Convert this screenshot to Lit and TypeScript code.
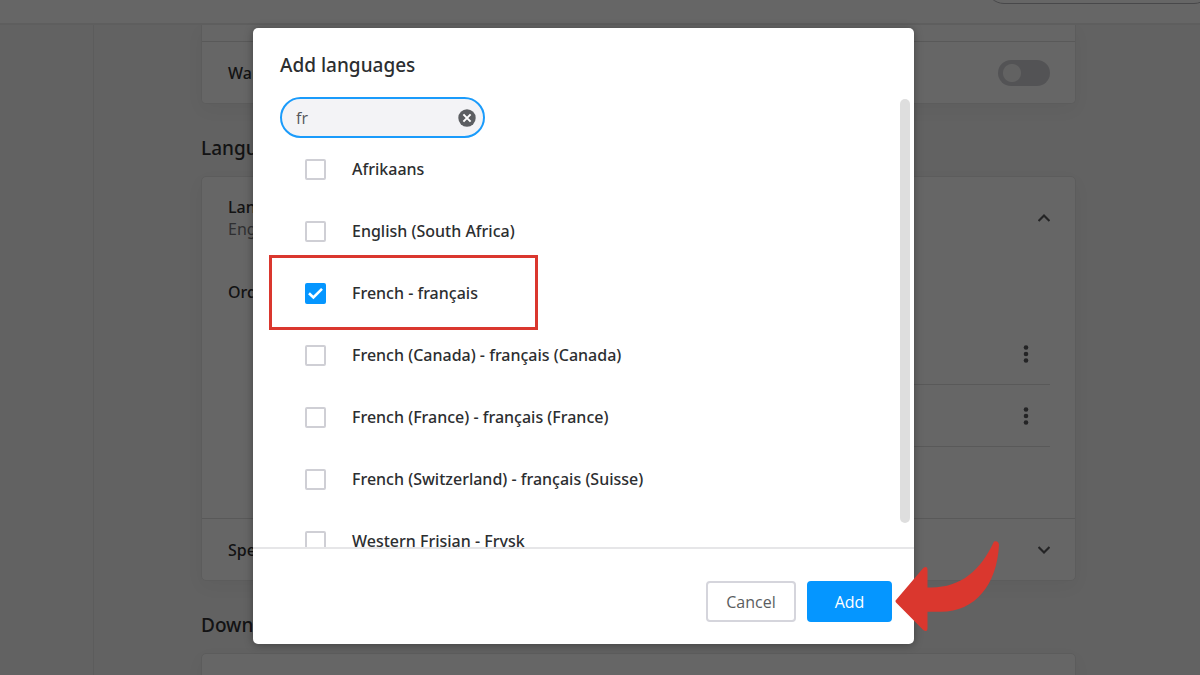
import { LitElement, html, css, svg, nothing } from "lit";
import { customElement, property, state } from "lit/decorators.js";

interface Language {
  id: string;
  name: string;
  marked?: boolean;
}

const LANGUAGES: Language[] = [
  { id: "af", name: "Afrikaans" },
  { id: "en-ZA", name: "English (South Africa)" },
  { id: "fr", name: "French - français", marked: true },
  { id: "fr-CA", name: "French (Canada) - français (Canada)" },
  { id: "fr-FR", name: "French (France) - français (France)" },
  { id: "fr-CH", name: "French (Switzerland) - français (Suisse)" },
  { id: "fy", name: "Western Frisian - Frysk" },
];

const chevron = (up: boolean) => html`
  <svg width="12" height="10" viewBox="1 0 12 10" aria-hidden="true">
    <path
      d=${up ? "M1.5 8 L7 2.5 L12.5 8" : "M1.5 2 L7 7.5 L12.5 2"}
      fill="none" stroke="#5a5b5e" stroke-width="2.2"
    />
  </svg>
`;

const dots = html`
  <svg width="6" height="18" viewBox="0 0 6 18" aria-hidden="true">
    ${[2.5, 9, 15.5].map((y) => svg`<circle cx="3" cy=${y} r="2.3" fill="#5a5b5e" />`)}
  </svg>
`;

@customElement("settings-page")
export class SettingsPage extends LitElement {
  static styles = css`
    :host {
      display: flex;
      flex-direction: column;
      height: 100vh;
      overflow: hidden;
      background: #f4f4f4;
      color: #303032;
      font: 500 16px/22px "Noto Sans", "Open Sans", sans-serif;
    }
    .topbar {
      box-sizing: border-box;
      flex: none;
      display: flex;
      justify-content: flex-end;
      align-items: flex-start;
      height: 25px;
      background: #fff;
      border-bottom: 2px solid #ececec;
      overflow: hidden;
    }
    .address {
      box-sizing: border-box;
      width: 226px;
      height: 36px;
      margin: -32px -12px 0 0;
      border: 1px solid #b4b4b8;
      border-radius: 18px;
    }
    .columns {
      flex: 1;
      min-height: 0;
      display: flex;
    }
    .side {
      flex: none;
      width: 93px;
      border-right: 1px solid #e6e6e6;
    }
    .content {
      flex: 1;
      min-width: 0;
      padding: 0 124px 0 107px;
    }
    .card {
      background: #fff;
      border: 1px solid #e6e6e6;
      border-radius: 5px;
      box-shadow: 0 6px 18px rgba(0, 0, 0, 0.04);
    }
    .card.continued {
      border-top: 0;
      border-radius: 0 0 5px 5px;
      padding-top: 16px;
    }
    .row {
      display: flex;
      align-items: center;
      justify-content: space-between;
      height: 61px;
      padding: 0 25px 0 26px;
      border-top: 1px solid #dedede;
    }
    .row.first {
      height: 81px;
      border-top: 0;
    }
    .sub {
      color: #77777b;
      font-weight: 400;
    }
    h2 {
      margin: 0;
      padding: 29px 0 13px;
      font-size: 19px;
      line-height: 30px;
      font-weight: 500;
    }
    .order {
      padding: 23px 25px 71px 26px;
    }
    .item {
      display: flex;
      align-items: center;
      justify-content: flex-end;
      height: 61px;
      margin-left: 48px;
      padding-right: 21px;
      border-bottom: 1px solid #dedede;
    }
    .order p {
      margin: 0 0 20px;
    }
    button {
      display: flex;
      padding: 0;
      border: 0;
      background: none;
    }
    .switch {
      appearance: none;
      box-sizing: border-box;
      width: 52px;
      height: 26px;
      margin: 0;
      border-radius: 13px;
      background: radial-gradient(circle 9px at 14px 13px, #f6f6f6 8.5px, #cfcfd4 9.5px);
    }
  `;

  render() {
    return html`
      <div class="topbar"><div class="address"></div></div>
      <div class="columns">
        <div class="side"></div>
        <div class="content">
          <div class="card continued">
            <div class="row">
              <label for="warn">Warn me</label>
              <input id="warn" class="switch" type="checkbox" role="switch" />
            </div>
          </div>
          <h2>Languages</h2>
          <div class="card">
            <div class="row first">
              <div>
                <div>Language</div>
                <div class="sub">English</div>
              </div>
              <button aria-label="Collapse">${chevron(true)}</button>
            </div>
            <div class="order">
              <p>Order</p>
              <div class="item"><button aria-label="More actions">${dots}</button></div>
              <div class="item"><button aria-label="More actions">${dots}</button></div>
            </div>
            <div class="row">
              <span>Spell check</span>
              <button aria-label="Expand">${chevron(false)}</button>
            </div>
          </div>
          <h2>Downloads</h2>
          <div class="card"><div class="row first"></div></div>
        </div>
      </div>
    `;
  }
}

@customElement("language-option")
export class LanguageOption extends LitElement {
  @property() name = "";
  @property({ type: Boolean }) checked = false;
  @property({ type: Boolean }) marked = false;

  static styles = css`
    :host {
      display: block;
    }
    .option {
      position: relative;
      display: flex;
      align-items: center;
      gap: 26px;
      height: 62px;
      padding-left: 25px;
    }
    .box {
      display: grid;
      width: 21px;
      height: 21px;
    }
    .box > * {
      grid-area: 1 / 1;
    }
    input {
      appearance: none;
      box-sizing: border-box;
      width: 21px;
      height: 21px;
      margin: 0;
      border: 2px solid #cfcfd5;
      border-radius: 2px;
      background: #fff;
    }
    input:checked {
      border-color: #0596ff;
      background: #0596ff;
    }
    svg {
      pointer-events: none;
    }
    .mark {
      position: absolute;
      box-sizing: border-box;
      top: -7px;
      left: -11px;
      width: 269px;
      height: 75px;
      border: 3px solid #da372e;
      pointer-events: none;
    }
  `;

  private toggle(e: Event) {
    this.checked = (e.target as HTMLInputElement).checked;
  }

  render() {
    return html`
      <div class="option">
        <span class="box">
          <input id="pick" type="checkbox" .checked=${this.checked} @change=${this.toggle} />
          ${this.checked
            ? html`<svg width="21" height="21" viewBox="0 0 21 21" aria-hidden="true">
                <path d="M4 10.3 L8.4 14.5 L17 5.8" fill="none" stroke="#fff" stroke-width="2.6" />
              </svg>`
            : nothing}
        </span>
        <label for="pick">${this.name}</label>
        ${this.marked ? html`<div class="mark"></div>` : nothing}
      </div>
    `;
  }
}

@customElement("add-languages-dialog")
export class AddLanguagesDialog extends LitElement {
  @state() private query = "fr";

  static styles = css`
    :host {
      display: block;
      box-sizing: border-box;
      width: 100%;
      max-width: 661px;
      color: #2c2e30;
      background: #fff;
      border-radius: 5px;
      box-shadow: 0 1px 8px rgba(0, 0, 0, 0.35);
      font: 500 16px/22px "Noto Sans", "Open Sans", sans-serif;
    }
    h1 {
      margin: 0;
      padding: 22px 27px 17px;
      font-size: 19px;
      line-height: 30px;
      font-weight: 500;
    }
    .body {
      display: flex;
      height: 452px;
      border-bottom: 2px solid #e6e6e8;
      box-sizing: border-box;
    }
    .scroll {
      flex: 1;
      min-width: 0;
      padding-left: 27px;
      overflow: hidden;
    }
    .thumb {
      width: 10px;
      height: 424px;
      margin: 2px 4px 0 0;
      border-radius: 5px;
      background: #dedede;
    }
    .search {
      box-sizing: border-box;
      display: flex;
      align-items: center;
      width: 205px;
      height: 41px;
      padding: 0 7px 0 14px;
      border: 2px solid #1a9bfb;
      border-radius: 21px;
      background: #f3f3f6;
    }
    .search input {
      flex: 1;
      min-width: 0;
      padding: 0;
      border: 0;
      outline: 0;
      background: none;
      color: #55575a;
      font: 400 16px/22px "Open Sans", "Noto Sans", sans-serif;
    }
    .clear {
      display: flex;
      padding: 0;
      border: 0;
      background: none;
    }
    footer {
      position: relative;
      display: flex;
      justify-content: flex-end;
      gap: 11px;
      padding: 32px 22px 22px;
    }
    .action {
      box-sizing: border-box;
      width: 90px;
      height: 41px;
      padding: 0;
      border: 2px solid #d5d5dc;
      border-radius: 4px;
      background: #fff;
      color: #5b5d60;
      font: 400 16px/22px "Open Sans", "Noto Sans", sans-serif;
    }
    .action.primary {
      width: 85px;
      border-color: #0596ff;
      background: #0596ff;
      color: #fff;
    }
    .arrow {
      position: absolute;
      top: -9px;
      right: -87px;
      pointer-events: none;
    }
  `;

  render() {
    return html`
      <h1 id="title">Add languages</h1>
      <div class="body">
        <div class="scroll">
          <div class="search">
            <input
              type="text"
              aria-label="Search languages"
              .value=${this.query}
              @input=${(e: Event) => (this.query = (e.target as HTMLInputElement).value)}
            />
            <button class="clear" aria-label="Clear search" @click=${() => (this.query = "")}>
              <svg width="18" height="18" viewBox="0 0 18 18" aria-hidden="true">
                <circle cx="9" cy="9" r="8.7" fill="#5c5e62" />
                <path d="M5.4 5.4 L12.6 12.6 M12.6 5.4 L5.4 12.6" stroke="#fff" stroke-width="2" />
              </svg>
            </button>
          </div>
          ${LANGUAGES.map(
            (l) => html`<language-option
              .name=${l.name}
              .checked=${l.id === "fr"}
              .marked=${!!l.marked}
            ></language-option>`
          )}
        </div>
        <div class="thumb"></div>
      </div>
      <footer>
        <button class="action">Cancel</button>
        <button class="action primary">Add</button>
        <svg class="arrow" width="106" height="92" viewBox="0 0 106 92" aria-hidden="true">
          <path
            fill="#da372e"
            d="M0.6 60.4 Q0.2 61.5 1 62.5 L28.5 90.3 Q32.5 92.5 32.5 88.5 V71.7 H46 C80 71.7 102 45 104 5 Q103.5 0.3 99 1.6 C85 32 64 49 32.5 47.4 V30 Q32.5 25.5 28.5 27.8 Z"
          />
        </svg>
      </footer>
    `;
  }
}

@customElement("app-root")
export class AppRoot extends LitElement {
  static styles = css`
    :host {
      display: block;
      position: relative;
      height: 100vh;
      overflow: hidden;
    }
    .scrim {
      position: absolute;
      inset: 0;
      display: flex;
      justify-content: center;
      align-items: flex-start;
      padding: 28px 33px 0 0;
      background: rgba(0, 0, 0, 0.6);
    }
  `;

  render() {
    return html`
      <settings-page></settings-page>
      <div class="scrim">
        <add-languages-dialog role="dialog" aria-label="Add languages"></add-languages-dialog>
      </div>
    `;
  }
}
